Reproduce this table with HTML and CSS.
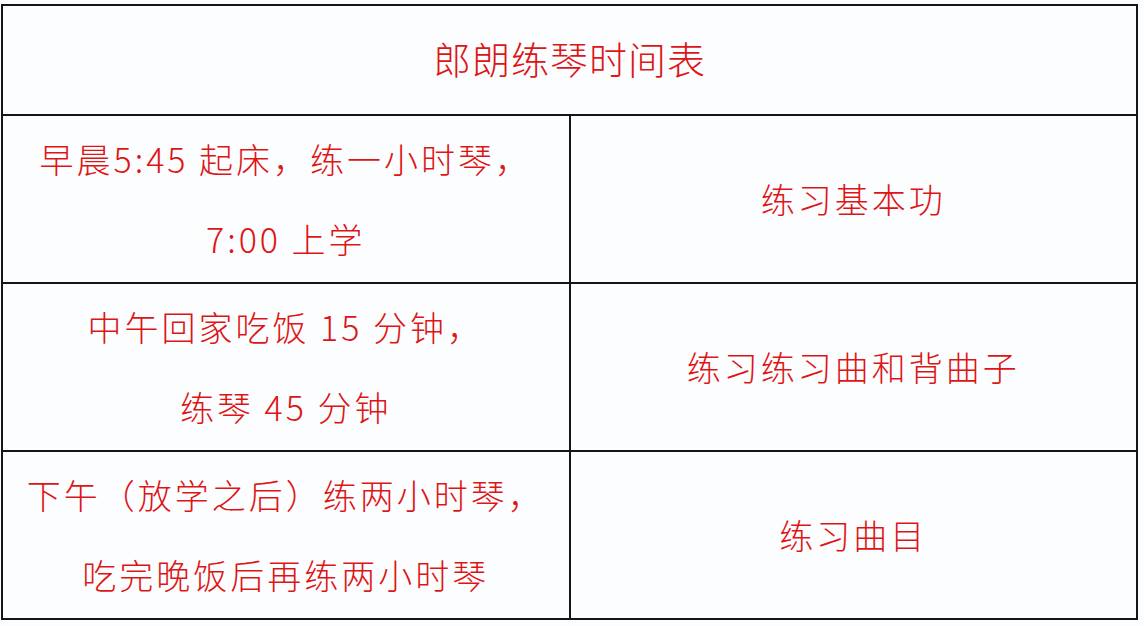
FILE: index.html
```html
<!DOCTYPE html>
<html lang="zh-CN">
<head>
<meta charset="utf-8">
<link rel="stylesheet" href="styles.css">
</head>
<body>
<table class="schedule">
  <tr class="title-row">
    <td colspan="2">郎朗练琴时间表</td>
  </tr>
  <tr class="row">
    <td class="left"><p class="l1">早晨<span class="num">5:45</span> 起床，练一小时琴，</p><p class="l2"><span class="num">7:00</span> 上学</p></td>
    <td class="right">练习基本功</td>
  </tr>
  <tr class="row">
    <td class="left"><p class="l1">中午回家吃饭 <span class="num">15</span> 分钟，</p><p class="l2">练琴 <span class="num">45</span> 分钟</p></td>
    <td class="right">练习练习曲和背曲子</td>
  </tr>
  <tr class="row">
    <td class="left"><p class="l1">下午（放学之后）练两小时琴，</p><p class="l2">吃完晚饭后再练两小时琴</p></td>
    <td class="right">练习曲目</td>
  </tr>
</table>
</body>
</html>
```

FILE: styles.css
```css
html, body {
  margin: 0;
  padding: 0;
  background: #fcfdff;
}
body {
  padding: 4px 0 0 1px;
  font-family: "Noto Sans CJK SC", "Noto Sans", sans-serif;
  font-weight: 300;
  color: #dd1515;
}
.schedule {
  border-collapse: collapse;
  width: 1137px;
  table-layout: fixed;
}
.schedule td {
  border: 2px solid #151515;
  text-align: center;
  vertical-align: middle;
  padding: 0;
  font-size: 34px;
  letter-spacing: 3px;
  line-height: 1;
}
.title-row td {
  height: 104px;
  font-size: 38px;
  letter-spacing: 1px;
  padding-bottom: 4px;
}
.row td {
  height: 166px;
}
.left {
  width: 567px;
}
.left p {
  margin: 0;
}
.left .l2 {
  margin-top: 46px;
}
.num {
  letter-spacing: 3px;
}
```
